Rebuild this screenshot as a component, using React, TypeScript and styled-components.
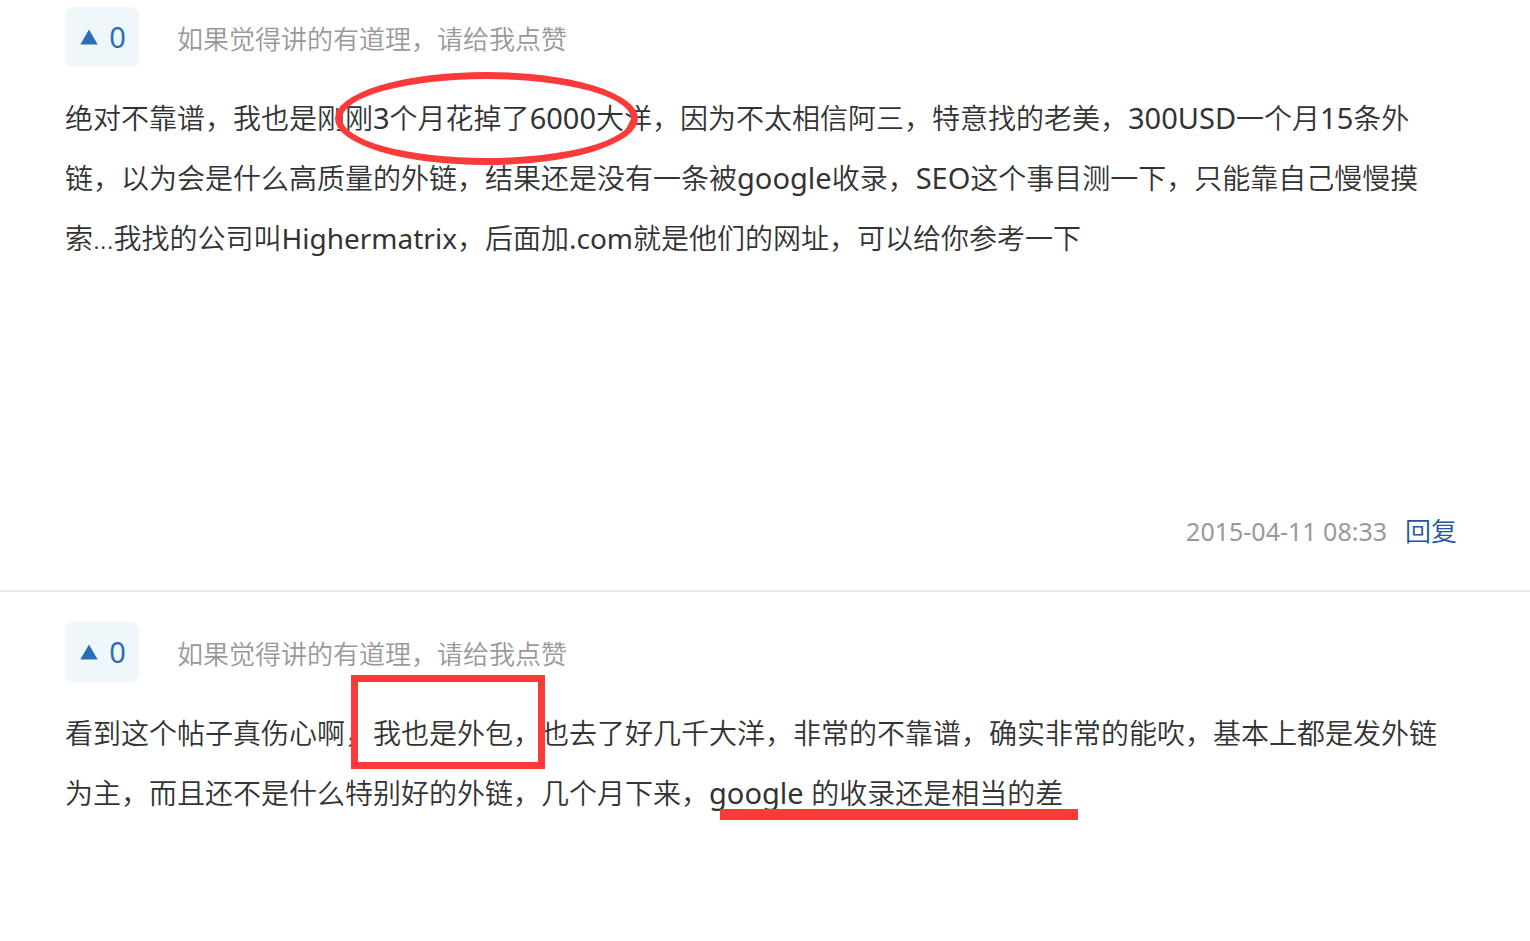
import React from "react";
import styled, { createGlobalStyle } from "styled-components";

const GlobalStyle = createGlobalStyle`
  * { box-sizing: border-box; }
  body {
    margin: 0;
    background: #fff;
    color: #333;
    font-family: "Noto Sans", "Noto Sans CJK SC", sans-serif;
    font-weight: 350;
  }
`;

const Thread = styled.main`
  width: 100%;
`;

const Post = styled.article<{ $first?: boolean }>`
  padding: ${(p) => (p.$first ? 7 : 30)}px 73px 40px 65px;
  & + & {
    border-top: 2px solid #e5e5e5;
  }
`;

const PostHeader = styled.header`
  display: flex;
  align-items: center;
  gap: 38px;
`;

const VoteButton = styled.button`
  display: flex;
  align-items: center;
  justify-content: center;
  gap: 11px;
  width: 74px;
  height: 60px;
  padding: 0 0 0 2px;
  border: 0;
  border-radius: 8px;
  background: #eff7fb;
  color: #2b6fb3;
  font: inherit;
  font-weight: 400;
  font-size: 29px;
  line-height: 60px;
  cursor: pointer;
`;

const Hint = styled.p`
  margin: 0;
  padding-top: 4px;
  color: #999;
  font-size: 26px;
  line-height: 56px;
`;

const PostBody = styled.div<{ $minHeight?: number }>`
  position: relative;
  min-height: ${(p) => p.$minHeight ?? 0}px;
  margin-top: 21px;
`;

const Text = styled.p`
  margin: 0;
  font-size: 28px;
  line-height: 60px;
`;

const Latin = styled.span<{ $name?: boolean }>`
  font-size: ${(p) => (p.$name ? 28 : 29)}px;
  font-weight: 400;
  line-height: 1;
`;

const PostFooter = styled.footer`
  display: flex;
  justify-content: flex-end;
  align-items: center;
  gap: 18px;
  color: #999;
  font-size: 25px;
  line-height: 38px;
`;

const PostTime = styled.time`
  font-weight: 400;
`;

const ReplyLink = styled.a`
  color: #259;
  font-size: 26px;
  text-decoration: none;
`;

const Mark = styled.div<{ $x: number; $y: number; $w: number; $h: number }>`
  position: absolute;
  left: ${(p) => p.$x}px;
  top: ${(p) => p.$y}px;
  width: ${(p) => p.$w}px;
  height: ${(p) => p.$h}px;
  pointer-events: none;
`;

const EllipseMark = styled(Mark)`
  border: 7px solid #fc3a3a;
  border-radius: 50%;
`;

const BoxMark = styled(Mark)`
  border: 7px solid #fc3a3a;
`;

const LineMark = styled(Mark)`
  background: #fc3a3a;
`;

function PostTop() {
  return (
    <PostHeader>
      <VoteButton type="button" aria-label="点赞 0">
        <svg width="18" height="16" viewBox="0 0 18 16" aria-hidden="true">
          <path d="M9 0.5L17.7 15.5H0.3Z" fill="#2b6fb3" />
        </svg>
        <span>0</span>
      </VoteButton>
      <Hint>如果觉得讲的有道理，请给我点赞</Hint>
    </PostHeader>
  );
}

export default function App() {
  return (
    <>
      <GlobalStyle />
      <Thread>
        <Post $first>
          <PostTop />
          <PostBody $minHeight={424}>
            <Text>
              绝对不靠谱，我也是刚刚<Latin>3</Latin>个月花掉了<Latin>6000</Latin>
              大洋，因为不太相信阿三，特意找的老美，<Latin>300USD</Latin>一个月
              <Latin>15</Latin>条外链，以为会是什么高质量的外链，结果还是没有一条被
              <Latin>google</Latin>收录，<Latin>SEO</Latin>
              这个事目测一下，只能靠自己慢慢摸索...我找的公司叫
              <Latin $name>Highermatrix</Latin>，后面加<Latin $name>.com</Latin>
              就是他们的网址，可以给你参考一下
            </Text>
            <EllipseMark $x={270} $y={-16} $w={303} $h={93} />
          </PostBody>
          <PostFooter>
            <PostTime dateTime="2015-04-11T08:33">2015-04-11 08:33</PostTime>
            <ReplyLink href="#reply">回复</ReplyLink>
          </PostFooter>
        </Post>
        <Post>
          <PostTop />
          <PostBody>
            <Text>
              看到这个帖子真伤心啊，我也是外包，也去了好几千大洋，非常的不靠谱，确实非常的能吹，基本上都是发外链为主，而且还不是什么特别好的外链，几个月下来，
              <Latin>google </Latin>的收录还是相当的差
            </Text>
            <BoxMark $x={286} $y={-28} $w={194} $h={94} />
            <LineMark $x={655} $y={106} $w={358} $h={11} />
          </PostBody>
        </Post>
      </Thread>
    </>
  );
}
